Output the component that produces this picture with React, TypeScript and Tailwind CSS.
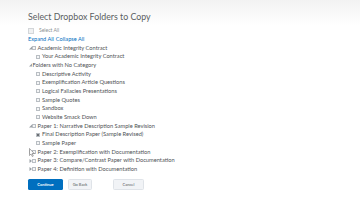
import React from 'react'

type Item = {label: string; checked?: boolean}
type Group = {label: string; box: boolean; expanded: boolean; children: Item[]}

const groups: Group[] = [
  {
    label: 'Academic Integrity Contract',
    box: true,
    expanded: true,
    children: [{label: 'Your Academic Integrity Contract'}],
  },
  {
    label: 'Folders with No Category',
    box: false,
    expanded: true,
    children: [
      {label: 'Descriptive Activity'},
      {label: 'Exemplification Article Questions'},
      {label: 'Logical Fallacies Presentations'},
      {label: 'Sample Quotes'},
      {label: 'Sandbox'},
      {label: 'Website Smack Down'},
    ],
  },
  {
    label: 'Paper 1: Narrative Description Sample Revision',
    box: true,
    expanded: true,
    children: [
      {label: 'Final Description Paper (Sample Revised)', checked: true},
      {label: 'Sample Paper'},
    ],
  },
  {label: 'Paper 2: Exemplification with Documentation', box: true, expanded: false, children: []},
  {label: 'Paper 3: Compare/Contrast Paper with Documentation', box: true, expanded: false, children: []},
  {label: 'Paper 4: Definition with Documentation', box: true, expanded: false, children: []},
]

function Box({checked}: {checked?: boolean}) {
  return (
    <span className="w-[4px] h-[4px] border-[0.5px] border-[#b9bec3] bg-[#f4f5f6] flex items-center justify-center">
      {checked && <span className="w-[2px] h-[2px] bg-[#6b6f73]" />}
    </span>
  )
}

function Caret({open}: {open: boolean}) {
  return (
    <svg width="3" height="4" viewBox="0 0 3 4" className="block">
      {open ? <path d="M3 0.5 L3 3.5 L0 3.5 Z" fill="#9aa0a6" /> : <path d="M0.5 0 L3 2 L0.5 4 Z" fill="#9aa0a6" />}
    </svg>
  )
}

export default function App() {
  return (
    <div className="relative w-[360px] h-[202px] overflow-hidden bg-white font-['Lato',sans-serif] text-[#4f5356]">
      <div className="bg-gradient-to-b from-[#f2f2f2] to-white pl-[28px] pt-[11px] h-[25px]">
        <h1 className="text-[8.8px] leading-[12px] text-[#5a5e61]">Select Dropbox Folders to Copy</h1>
      </div>

      <div className="pl-[28px]">
        <div className="flex items-center gap-[5px] h-[7px] mt-[2.5px] text-[5px]">
          <span className="w-[6px] h-[6px] border-[0.5px] border-[#d3d6d9] bg-[#f0f1f2]" />
          <span className="text-[#8a8f94]">Select All</span>
        </div>
        <div className="flex items-center gap-[2px] h-[8px] mt-[0.5px] text-[5.6px] text-[#006fbf]">
          <span>Expand All</span>
          <span>Collapse All</span>
        </div>

        <div className="mt-[0.5px] text-[5.7px] leading-[8.7px]">
          {groups.map((g) => (
            <div key={g.label}>
              <div className="flex items-center h-[8.7px]">
                <span className="w-[4px] flex justify-start pl-[1px]">
                  <Caret open={g.expanded} />
                </span>
                {g.box && (
                  <span className="mr-[1.5px]">
                    <Box />
                  </span>
                )}
                <span className={g.box ? 'ml-[0px]' : 'ml-[0.5px]'}>{g.label}</span>
              </div>
              {g.children.map((c) => (
                <div key={c.label} className="flex items-center h-[8.7px] pl-[8px] gap-[2px]">
                  <Box checked={c.checked} />
                  <span>{c.label}</span>
                </div>
              ))}
            </div>
          ))}
        </div>

        <div className="flex items-center mt-[5.4px] text-[4px] font-bold">
          <button className="w-[35px] h-[11px] rounded-[1.5px] bg-[#006fbf] text-white">Continue</button>
          <button className="ml-[5px] w-[24px] h-[11px] rounded-[1.5px] bg-[#f1f3f6] border-[0.5px] border-[#dfe3e8] text-[#565a5c] font-normal">
            Go Back
          </button>
          <button className="ml-[21px] w-[31px] h-[11px] rounded-[1.5px] bg-[#f1f3f6] border-[0.5px] border-[#dfe3e8] text-[#565a5c] font-normal">
            Cancel
          </button>
        </div>
      </div>

      {/* mouse pointer */}
      <svg width="6" height="9" viewBox="0 0 6 9" className="absolute left-[29px] top-[148px]">
        <path d="M0.5 0.5 L0.5 7.5 L2 6 L3.3 8.5 L4.3 8 L3.1 5.6 L5.3 5.6 Z" fill="#ffffff" stroke="#555" strokeWidth="0.5" />
      </svg>
    </div>
  )
}
